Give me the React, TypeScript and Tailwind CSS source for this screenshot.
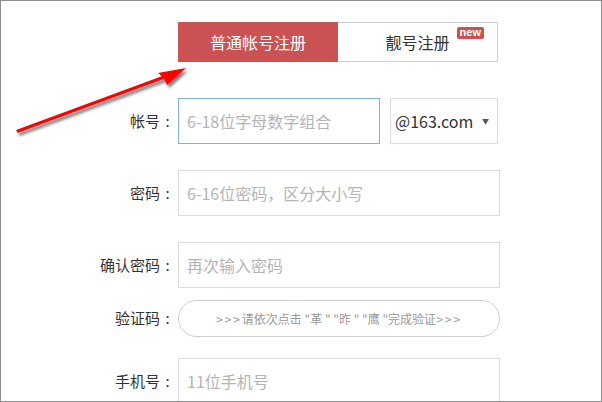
import React from "react";

const font = { fontFamily: '"Noto Sans CJK SC", "Noto Sans", sans-serif' };

function Row({ label, children, className }: { label: string; children: React.ReactNode; className?: string }) {
  return (
    <div className={"flex items-center " + (className || "")}>
      <div className="w-[174px] flex justify-end text-[15px] text-[#333] whitespace-nowrap">
        <span>{label}</span>
        <span className="w-[15px] text-center">:</span>
      </div>
      <div className="ml-[3px] flex items-center">{children}</div>
    </div>
  );
}

export default function App() {
  return (
    <div
      className="relative w-[602px] h-[402px] border border-[#8c8c8c] bg-white overflow-hidden"
      style={font}
    >
      <div className="flex flex-col pt-[21px]">
        <div className="ml-[177px] flex w-[320px] h-[40px]">
          <div className="w-[160px] h-full bg-[#cb5252] text-white text-[16px] flex items-center justify-center">
            普通帐号注册
          </div>
          <div className="relative flex-1 h-full border border-l-0 border-[#cfcfcf] text-[#333] text-[16px] flex items-center justify-center">
            靓号注册
            <span
              className="absolute top-[4px] right-[13px] h-[12px] px-[3px] rounded-[2px] bg-[#cb5252] text-white text-[11px] font-bold leading-[11px]"
              style={{ fontFamily: '"Liberation Sans", Arial, sans-serif' }}
            >
              new
            </span>
          </div>
        </div>

        <Row label="帐号" className="mt-[36px]">
          <div className="w-[202px] h-[46px] border border-[#7fb3d3] flex items-center pl-[8px] text-[16px] text-[#b5b5b5]">
            6-18位字母数字组合
          </div>
          <div className="ml-[10px] w-[108px] h-[46px] border border-[#dcdcdc] flex items-center pl-[4px] pr-[8px] text-[16px] text-[#333]">
            <span className="flex-1">@163.com</span>
            <span className="text-[7px] text-[#555]">▼</span>
          </div>
        </Row>

        <Row label="密码" className="mt-[26px]">
          <div className="w-[322px] h-[46px] border border-[#dcdcdc] flex items-center pl-[8px] text-[16px] text-[#b5b5b5]">
            6-16位密码，区分大小写
          </div>
        </Row>

        <Row label="确认密码" className="mt-[26px]">
          <div className="w-[322px] h-[46px] border border-[#dcdcdc] flex items-center pl-[8px] text-[16px] text-[#b5b5b5]">
            再次输入密码
          </div>
        </Row>

        <Row label="验证码" className="mt-[12px]">
          <div className="w-[322px] h-[37px] border border-[#cfcfcf] rounded-full flex items-center justify-center text-[12px] text-[#999]">
            <span className="tracking-[2px]">&gt;&gt;&gt;</span>请依次点击 "革 " "昨 " "鹰 "完成验证<span className="tracking-[2px]">&gt;&gt;&gt;</span>
          </div>
        </Row>

        <Row label="手机号" className="mt-[21px]">
          <div className="w-[322px] h-[46px] border border-[#dcdcdc] flex items-center pl-[8px] text-[16px] text-[#b5b5b5]">
            11位手机号
          </div>
        </Row>
      </div>

      <svg className="absolute left-0 top-0 pointer-events-none" width="602" height="402">
        <defs>
          <filter id="sh" x="-20%" y="-20%" width="140%" height="140%">
            <feGaussianBlur in="SourceAlpha" stdDeviation="1.6" />
            <feOffset dx="2" dy="3" result="b" />
            <feComponentTransfer>
              <feFuncA type="linear" slope="0.55" />
            </feComponentTransfer>
            <feMerge>
              <feMergeNode />
              <feMergeNode in="SourceGraphic" />
            </feMerge>
          </filter>
        </defs>
        <g filter="url(#sh)">
          <line x1="17" y1="130" x2="166" y2="75" stroke="#ff0000" strokeWidth="3.2" strokeLinecap="round" />
          <path d="M185 67 L157 72 L163 77 L166 84 Z" fill="#ff0000" />
        </g>
      </svg>
    </div>
  );
}
